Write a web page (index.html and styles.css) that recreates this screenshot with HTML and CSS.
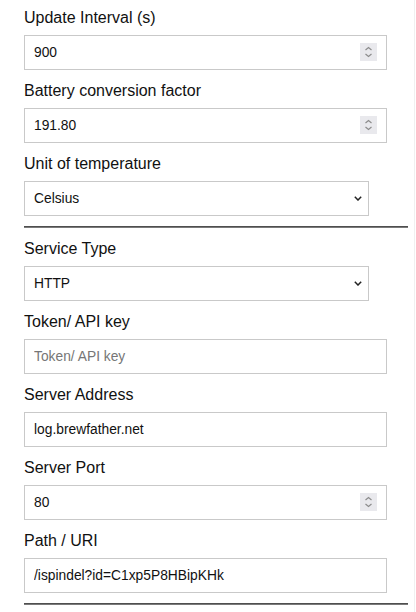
FILE: index.html
```html
<!DOCTYPE html>
<html lang="en">
<head>
    <meta charset="UTF-8">
    <meta name="viewport" content="width=device-width, initial-scale=1.0">
    <title>iSpindel Settings</title>
    <link rel="stylesheet" href="styles.css">
</head>
<body>

<div class="panel">
    <label class="field-label" for="interval">Update Interval (s)</label>
    <div class="field number-field">
        <input id="interval" type="number" value="900">
        <span class="spinner">
            <svg width="17" height="18" viewBox="0 0 17 18">
                <path d="M5.5 7 L8.5 4.5 L11.5 7" />
                <path d="M5.5 11 L8.5 13.5 L11.5 11" />
            </svg>
        </span>
    </div>

    <label class="field-label" for="factor">Battery conversion factor</label>
    <div class="field number-field">
        <input id="factor" type="number" value="191.80" step="0.01">
        <span class="spinner">
            <svg width="17" height="18" viewBox="0 0 17 18">
                <path d="M5.5 7 L8.5 4.5 L11.5 7" />
                <path d="M5.5 11 L8.5 13.5 L11.5 11" />
            </svg>
        </span>
    </div>

    <label class="field-label" for="unit">Unit of temperature</label>
    <div class="field select-field">
        <select id="unit">
            <option>Celsius</option>
            <option>Fahrenheit</option>
            <option>Kelvin</option>
        </select>
        <svg class="chevron" width="8" height="5" viewBox="0 0 8 5">
            <path d="M0.8 0.8 L4 4 L7.2 0.8" />
        </svg>
    </div>

    <hr class="divider">

    <label class="field-label" for="service">Service Type</label>
    <div class="field select-field">
        <select id="service">
            <option>HTTP</option>
            <option>MQTT</option>
            <option>TCP</option>
        </select>
        <svg class="chevron" width="8" height="5" viewBox="0 0 8 5">
            <path d="M0.8 0.8 L4 4 L7.2 0.8" />
        </svg>
    </div>

    <label class="field-label" for="token">Token/ API key</label>
    <div class="field">
        <input id="token" type="text" placeholder="Token/ API key">
    </div>

    <label class="field-label" for="server">Server Address</label>
    <div class="field">
        <input id="server" type="text" value="log.brewfather.net">
    </div>

    <label class="field-label" for="port">Server Port</label>
    <div class="field number-field">
        <input id="port" type="number" value="80">
        <span class="spinner">
            <svg width="17" height="18" viewBox="0 0 17 18">
                <path d="M5.5 7 L8.5 4.5 L11.5 7" />
                <path d="M5.5 11 L8.5 13.5 L11.5 11" />
            </svg>
        </span>
    </div>

    <label class="field-label" for="uri">Path / URI</label>
    <div class="field">
        <input id="uri" type="text" value="/ispindel?id=C1xp5P8HBipKHk">
    </div>

    <hr class="divider">
</div>

</body>
</html>
```

FILE: styles.css
```css
body {
    margin: 0;
    background-color: #fff;
    font-family: 'Liberation Sans', Arial, sans-serif;
    color: #111;
}

.panel {
    width: 415px;
    box-sizing: border-box;
    padding: 9px 6px 0 24px;
    border-right: 1px solid #f0f0f0;
    min-height: 612px;
}

.field-label {
    display: block;
    font-size: 16px;
    line-height: 18px;
    margin-top: 12px;
}

.field-label:first-child {
    margin-top: 0;
}

.field {
    position: relative;
    width: 363px;
    margin-top: 8px;
}

.field input,
.field select {
    display: block;
    width: 100%;
    height: 35px;
    box-sizing: border-box;
    margin: 0;
    padding: 0 9px;
    border: 1px solid #c9c9c9;
    border-radius: 0;
    background-color: #fff;
    font-family: 'Liberation Sans', Arial, sans-serif;
    font-size: 13.8px;
    color: #111;
    outline: none;
}

.field input::placeholder {
    color: #767676;
}

.number-field input {
    -moz-appearance: textfield;
}

.number-field input::-webkit-inner-spin-button,
.number-field input::-webkit-outer-spin-button {
    -webkit-appearance: none;
    margin: 0;
}

.spinner {
    position: absolute;
    top: 8px;
    right: 10px;
    width: 17px;
    height: 18px;
    background-color: #e9e9ed;
}

.spinner svg {
    display: block;
}

.spinner path {
    fill: none;
    stroke: #8c8c8c;
    stroke-width: 1.2;
}

.select-field {
    width: 345px;
}

.field select {
    -webkit-appearance: none;
    appearance: none;
    padding-left: 9px;
}

.chevron {
    position: absolute;
    top: 15px;
    right: 7px;
    pointer-events: none;
}

.chevron path {
    fill: none;
    stroke: #222;
    stroke-width: 1.5;
}

.divider {
    margin: 10px 0 12px 0;
    height: 0;
    border: none;
    border-top: 1px solid #4f4f4f;
    border-bottom: 1px solid #7a7a7a;
}
```
